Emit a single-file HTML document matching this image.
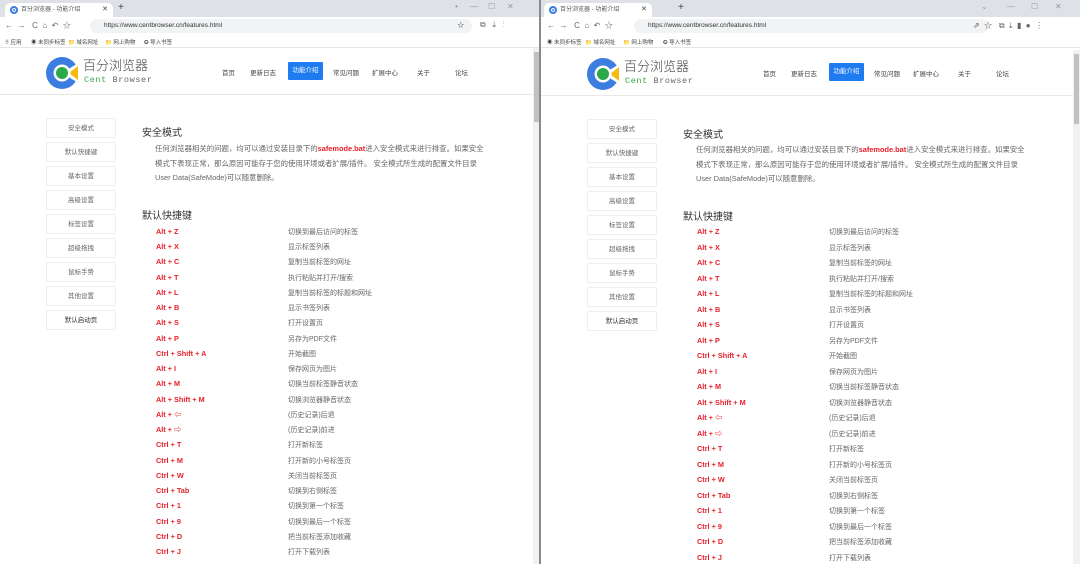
<!DOCTYPE html>
<html><head><meta charset="utf-8"><style>
*{margin:0;padding:0;box-sizing:border-box}
body{width:1080px;height:564px;overflow:hidden;background:#fff;font-family:"Liberation Sans","Noto Sans CJK SC",sans-serif;position:relative}
.win{position:absolute;top:0;height:564px;overflow:hidden;background:#fff}
.tabs{position:absolute;left:0;top:0;right:0;height:17px;background:#dee1e6}
.tab{position:absolute;left:5px;top:3px;width:108px;height:14px;background:#fff;border-radius:5px 5px 0 0;font-size:6px;color:#555;line-height:14px;padding-left:16px}
.tab .fav{position:absolute;left:5px;top:3px;width:8px;height:8px;border-radius:50%;background:#3b7de0;border:2px solid #3b7de0;box-shadow:inset 0 0 0 1px #fff}
.tab .x{position:absolute;right:5px;top:0;font-size:7px;color:#444}
.plus{position:absolute;left:118px;top:2px;font-size:10px;color:#444}
.addr{position:absolute;left:0;right:0;top:17px;height:18px;background:#fff}
.nav{position:absolute;top:3px;font-size:8px;color:#666}
.url{position:absolute;left:90px;top:2px;height:14px;background:#f1f3f4;border-radius:7px;font-size:6.5px;color:#333;line-height:14px;padding-left:14px}
.bm{position:absolute;left:0;right:0;top:35px;height:13px;background:#fff;font-size:5.5px;color:#444;border-bottom:1px solid #e6e6e6}
.bm span{position:absolute;top:3px}
.page{position:absolute;left:0;top:48px;bottom:0}
.hdr{position:absolute;left:0;right:0;top:0;height:47px;border-bottom:1px solid #e8e8e8}
.brand{position:absolute;left:83px;top:7px;font-size:13px;color:#444;letter-spacing:0;font-family:"Noto Sans CJK SC",sans-serif;font-weight:300}
.sub{position:absolute;left:84px;top:27px;font-size:8.5px;font-family:"Liberation Mono",monospace;color:#666;letter-spacing:0.6px}
.menu span{position:absolute;top:19px;font-size:6.5px;color:#444}
.menu .act{top:14px;height:18px;width:35px;background:#1e7bf0;color:#fff;text-align:center;line-height:18px;border-radius:1px}
.side div{position:absolute;left:46px;width:70px;height:20px;border:1px solid #eee;border-radius:2px;font-size:6.5px;color:#666;text-align:center;line-height:19px}
.h{position:absolute;left:142px;font-size:10px;color:#333}
.p{position:absolute;left:155px;width:380px;font-size:7.4px;color:#666;line-height:14.5px;white-space:nowrap}
.p b{color:#e8202a}
.k{position:absolute;left:156px;font-size:7.3px;font-weight:bold;color:#e8202a}
.d{position:absolute;left:288px;font-size:7px;color:#666}
.sb{position:absolute;right:0;top:48px;bottom:0;width:7px;background:#f1f1f1}
.sb i{position:absolute;left:1px;top:4px;width:5px;height:70px;background:#c1c1c1}
.wc{position:absolute;top:2px;font-size:8px;color:#999}
</style></head><body>

<div class="win" style="left:0;width:540px">
<div class="tabs"><div class="tab"><span class="fav"></span>百分浏览器 - 功能介绍<span class="x">✕</span></div><span class="plus">+</span>
<span class="wc" style="left:455px">•</span><span class="wc" style="left:470px">—</span><span class="wc" style="left:488px">☐</span><span class="wc" style="left:507px">✕</span></div>
<div class="addr"><span class="nav" style="left:5px">←&nbsp;&nbsp;→&nbsp;&nbsp;&nbsp;C&nbsp;&nbsp;⌂&nbsp;&nbsp;↶&nbsp;&nbsp;☆</span><div class="url" style="width:382px">https://www.centbrowser.cn/features.html<span style="position:absolute;right:8px">☆</span></div><span class="nav" style="left:480px">⧉&nbsp;&nbsp;&nbsp;⤓&nbsp;&nbsp;&nbsp;⋮</span></div>
<div class="bm"><span style="left:5px">⠿ 应用</span><span style="left:31px">◉ 未同步标签</span><span style="left:68px">📁 域名网址</span><span style="left:105px">📁 网上购物</span><span style="left:144px">✪ 导入书签</span></div>
<div class="page" style="width:540px">
<div class="hdr">
<svg style="position:absolute;left:45px;top:8px" width="36" height="34" viewBox="0 0 36 34"><circle cx="17" cy="17" r="16" fill="#3b7de0"/><path d="M17 17 L35 6 L35 28 Z" fill="#fff"/><path d="M24 17 L33 10 L33 24 Z" fill="#f6b90c"/><circle cx="17" cy="17" r="8.5" fill="#fff"/><circle cx="17" cy="17" r="6" fill="#2ba84a"/></svg>
<div class="brand">百分浏览器</div><div class="sub"><span style="color:#38a64a">Cent</span> Browser</div>
<div class="menu"><span style="left:222px">首页</span><span style="left:250px">更新日志</span><span class="act" style="left:288px">功能介绍</span><span style="left:333px">常见问题</span><span style="left:372px">扩展中心</span><span style="left:417px">关于</span><span style="left:455px">论坛</span></div>
</div>
<div class="side">
<div style="top:70px">安全模式</div><div style="top:94px">默认快捷键</div><div style="top:118px">基本设置</div><div style="top:142px">高级设置</div><div style="top:166px">标签设置</div><div style="top:190px">超级拖拽</div><div style="top:214px">鼠标手势</div><div style="top:238px">其他设置</div><div style="top:262px;color:#333">默认启动页</div>
</div>
<div class="h" style="top:76px">安全模式</div>
<div class="p" style="top:94px">任何浏览器相关的问题，均可以通过安装目录下的<b>safemode.bat</b>进入安全模式来进行排查。如果安全<br>模式下表现正常，那么原因可能存于您的使用环境或者扩展/插件。 安全模式所生成的配置文件目录<br>User Data(SafeMode)可以随意删除。</div>
<div class="h" style="top:159px">默认快捷键</div>
<div id="rowsL"></div>
</div>
<div class="sb"><i></i></div>
</div>
<div style="position:absolute;left:539px;top:0;width:2px;height:564px;background:#8a8a8a"></div>

<div class="win" style="left:541px;width:539px">
<div class="tabs"><div class="tab" style="left:3px"><span class="fav"></span>百分浏览器 - 功能介绍<span class="x">✕</span></div><span class="plus" style="left:137px">+</span>
<span class="wc" style="left:440px">⌄</span><span class="wc" style="left:466px">—</span><span class="wc" style="left:490px">☐</span><span class="wc" style="left:514px">✕</span></div>
<div class="addr"><span class="nav" style="left:6px">←&nbsp;&nbsp;→&nbsp;&nbsp;&nbsp;C&nbsp;&nbsp;⌂&nbsp;&nbsp;↶&nbsp;&nbsp;☆</span><div class="url" style="left:93px;width:355px">https://www.centbrowser.cn/features.html</div><span class="nav" style="left:432px">⇗&nbsp;&nbsp;☆&nbsp;&nbsp;&nbsp;⧉&nbsp;&nbsp;⤓&nbsp;&nbsp;▮&nbsp;&nbsp;●&nbsp;&nbsp;⋮</span></div>
<div class="bm"><span style="left:6px">◉ 未同步标签</span><span style="left:44px">📁 域名网址</span><span style="left:82px">📁 网上购物</span><span style="left:122px">✪ 导入书签</span></div>
<div class="page" style="width:539px;top:49px">
<div class="hdr">
<svg style="position:absolute;left:45px;top:8px" width="36" height="34" viewBox="0 0 36 34"><circle cx="17" cy="17" r="16" fill="#3b7de0"/><path d="M17 17 L35 6 L35 28 Z" fill="#fff"/><path d="M24 17 L33 10 L33 24 Z" fill="#f6b90c"/><circle cx="17" cy="17" r="8.5" fill="#fff"/><circle cx="17" cy="17" r="6" fill="#2ba84a"/></svg>
<div class="brand">百分浏览器</div><div class="sub"><span style="color:#38a64a">Cent</span> Browser</div>
<div class="menu"><span style="left:222px">首页</span><span style="left:250px">更新日志</span><span class="act" style="left:288px">功能介绍</span><span style="left:333px">常见问题</span><span style="left:372px">扩展中心</span><span style="left:417px">关于</span><span style="left:455px">论坛</span></div>
</div>
<div class="side">
<div style="top:70px">安全模式</div><div style="top:94px">默认快捷键</div><div style="top:118px">基本设置</div><div style="top:142px">高级设置</div><div style="top:166px">标签设置</div><div style="top:190px">超级拖拽</div><div style="top:214px">鼠标手势</div><div style="top:238px">其他设置</div><div style="top:262px;color:#333">默认启动页</div>
</div>
<div class="h" style="top:77px">安全模式</div>
<div class="p" style="top:94px">任何浏览器相关的问题，均可以通过安装目录下的<b>safemode.bat</b>进入安全模式来进行排查。如果安全<br>模式下表现正常，那么原因可能存于您的使用环境或者扩展/插件。 安全模式所生成的配置文件目录<br>User Data(SafeMode)可以随意删除。</div>
<div class="h" style="top:159px">默认快捷键</div>
<div id="rowsR"></div>
</div>
<div class="sb" style="top:50px"><i></i></div>
</div>

<script>
var R=[["Alt + Z","切换到最后访问的标签"],["Alt + X","显示标签列表"],["Alt + C","复制当前标签的网址"],["Alt + T","执行粘贴并打开/搜索"],["Alt + L","复制当前标签的标题和网址"],["Alt + B","显示书签列表"],["Alt + S","打开设置页"],["Alt + P","另存为PDF文件"],["Ctrl + Shift + A","开始截图"],["Alt + I","保存网页为图片"],["Alt + M","切换当前标签静音状态"],["Alt + Shift + M","切换浏览器静音状态"],["Alt + ⇦","(历史记录)后退"],["Alt + ⇨","(历史记录)前进"],["Ctrl + T","打开新标签"],["Ctrl + M","打开新的小号标签页"],["Ctrl + W","关闭当前标签页"],["Ctrl + Tab","切换到右侧标签"],["Ctrl + 1","切换到第一个标签"],["Ctrl + 9","切换到最后一个标签"],["Ctrl + D","把当前标签添加收藏"],["Ctrl + J","打开下载列表"]];
function fill(id,start,step){var h="";R.forEach(function(r,i){var t=start+i*step;h+='<div class="k" style="top:'+t+'px">'+r[0]+'</div><div class="d" style="top:'+t+'px">'+r[1]+'</div>';});document.getElementById(id).innerHTML=h;}
fill("rowsL",179,15.24);fill("rowsR",178,15.5);
</script>
</body></html>
